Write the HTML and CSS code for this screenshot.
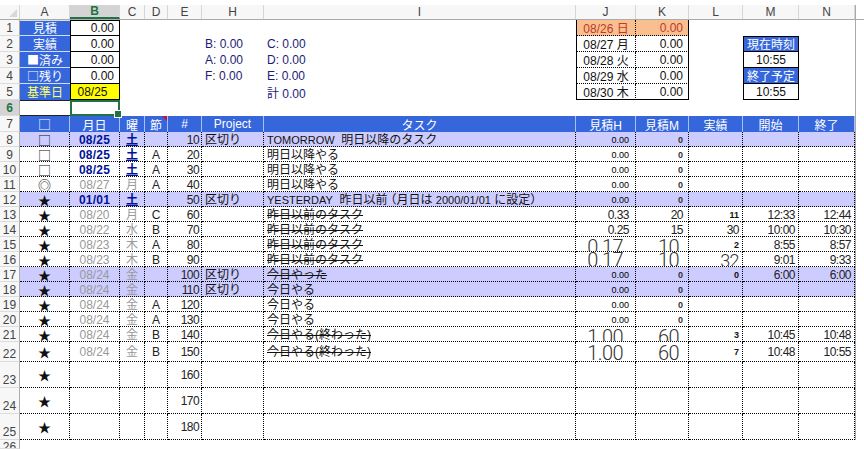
FILE: index.html
```html
<!DOCTYPE html>
<html lang="ja">
<head>
  <meta charset="UTF-8">
  <title>タスクシュート</title>
  <link rel="stylesheet" href="styles.css">
</head>
<body>
<div class="sheet">
  <!-- column letters -->
  <div class="row heads">
    <div class="corner"></div><div>A</div><div class="cur">B</div><div>C</div><div>D</div><div>E</div><div>H</div><div>I</div><div>J</div><div>K</div><div>L</div><div>M</div><div>N</div><div class="end"></div>
  </div>

  <!-- summary block -->
  <div class="row top">
    <div class="rh">1</div><div class="lab first">見積</div><div class="val first">0.00</div><div class="gap"></div><div></div><div></div><div class="day hot">08/26 日</div><div class="dayval hot">0.00</div><div></div><div></div><div></div><div class="end"></div>
  </div>
  <div class="row top">
    <div class="rh">2</div><div class="lab">実績</div><div class="val">0.00</div><div class="gap"></div><div class="sum">B: 0.00</div><div class="sum">C: 0.00</div><div class="day">08/27 月</div><div class="dayval">0.00</div><div></div><div class="clock lab first">現在時刻</div><div></div><div class="end"></div>
  </div>
  <div class="row top">
    <div class="rh">3</div><div class="lab">■済み</div><div class="val">0.00</div><div class="gap"></div><div class="sum">A: 0.00</div><div class="sum">D: 0.00</div><div class="day">08/28 火</div><div class="dayval">0.00</div><div></div><div class="clock">10:55</div><div></div><div class="end"></div>
  </div>
  <div class="row top">
    <div class="rh">4</div><div class="lab">□残り</div><div class="val">0.00</div><div class="gap"></div><div class="sum">F: 0.00</div><div class="sum">E: 0.00</div><div class="day">08/29 水</div><div class="dayval">0.00</div><div></div><div class="clock lab">終了予定</div><div></div><div class="end"></div>
  </div>
  <div class="row top">
    <div class="rh">5</div><div class="lab base">基準日</div><div class="val basedate">08/25</div><div class="gap"></div><div></div><div class="sum">計 0.00</div><div class="day">08/30 木</div><div class="dayval">0.00</div><div></div><div class="clock">10:55</div><div></div><div class="end"></div>
  </div>
  <div class="row top">
    <div class="rh cur">6</div><div class="sel-a"></div><div class="sel-b"></div><div class="gap"></div><div></div><div></div><div></div><div></div><div></div><div></div><div></div><div class="end"></div>
  </div>

  <!-- table header -->
  <div class="row thead">
    <div class="rh">7</div><div class="mark">□</div><div>月日</div><div>曜</div><div class="note">節</div><div>#</div><div>Project</div><div>タスク</div><div>見積H</div><div>見積M</div><div>実績</div><div>開始</div><div>終了</div><div class="end"></div>
  </div>

  <!-- tasks -->
  <div class="row task sep">
    <div class="rh">8</div><div class="mark">□</div><div class="date now">08/25</div><div class="wd now">土</div><div class="sec"></div><div class="no">10</div><div class="pj">区切り</div><div class="name"><span class="en">TOMORROW</span>&nbsp; 明日以降のタスク</div><div class="h">0.00</div><div class="m">0</div><div></div><div></div><div></div><div class="end"></div>
  </div>
  <div class="row task">
    <div class="rh">9</div><div class="mark">□</div><div class="date now">08/25</div><div class="wd now">土</div><div class="sec">A</div><div class="no">20</div><div class="pj"></div><div class="name">明日以降やる</div><div class="h">0.00</div><div class="m">0</div><div></div><div></div><div></div><div class="end"></div>
  </div>
  <div class="row task">
    <div class="rh">10</div><div class="mark">□</div><div class="date now">08/25</div><div class="wd now">土</div><div class="sec">A</div><div class="no">30</div><div class="pj"></div><div class="name">明日以降やる</div><div class="h">0.00</div><div class="m">0</div><div></div><div></div><div></div><div class="end"></div>
  </div>
  <div class="row task">
    <div class="rh">11</div><div class="mark">◎</div><div class="date">08/27</div><div class="wd">月</div><div class="sec">A</div><div class="no">40</div><div class="pj"></div><div class="name">明日以降やる</div><div class="h">0.00</div><div class="m">0</div><div></div><div></div><div></div><div class="end"></div>
  </div>
  <div class="row task sep">
    <div class="rh">12</div><div class="mark">★</div><div class="date now">01/01</div><div class="wd now">土</div><div class="sec"></div><div class="no">50</div><div class="pj">区切り</div><div class="name"><span class="en">YESTERDAY</span>&nbsp; 昨日以前<span class="paren">（</span>月日は <span class="en">2000/01/01</span> に設定）</div><div class="h">0.00</div><div class="m">0</div><div></div><div></div><div></div><div class="end"></div>
  </div>
  <div class="row task">
    <div class="rh">13</div><div class="mark">★</div><div class="date">08/20</div><div class="wd">月</div><div class="sec">C</div><div class="no">60</div><div class="pj"></div><div class="name"><s>昨日以前のタスク</s></div><div class="h plain">0.33</div><div class="m plain">20</div><div class="act">11</div><div class="tm">12:33</div><div class="tm">12:44</div><div class="end"></div>
  </div>
  <div class="row task">
    <div class="rh">14</div><div class="mark">★</div><div class="date">08/22</div><div class="wd">水</div><div class="sec">B</div><div class="no">70</div><div class="pj"></div><div class="name"><s>昨日以前のタスク</s></div><div class="h plain">0.25</div><div class="m plain">15</div><div class="act plain">30</div><div class="tm">10:00</div><div class="tm">10:30</div><div class="end"></div>
  </div>
  <div class="row task">
    <div class="rh">15</div><div class="mark">★</div><div class="date">08/23</div><div class="wd">木</div><div class="sec">A</div><div class="no">80</div><div class="pj"></div><div class="name"><s>昨日以前のタスク</s></div><div class="h big low">0.17</div><div class="m big low">10</div><div class="act">2</div><div class="tm">8:55</div><div class="tm">8:57</div><div class="end"></div>
  </div>
  <div class="row task">
    <div class="rh">16</div><div class="mark">★</div><div class="date">08/23</div><div class="wd">木</div><div class="sec">B</div><div class="no">90</div><div class="pj"></div><div class="name"><s>昨日以前のタスク</s></div><div class="h big">0.17</div><div class="m big">10</div><div class="act big mid">32</div><div class="tm">9:01</div><div class="tm">9:33</div><div class="end"></div>
  </div>
  <div class="row task sep">
    <div class="rh">17</div><div class="mark">★</div><div class="date">08/24</div><div class="wd">金</div><div class="sec"></div><div class="no">100</div><div class="pj">区切り</div><div class="name"><s>今日やった</s></div><div class="h">0.00</div><div class="m">0</div><div class="act">0</div><div class="tm">6:00</div><div class="tm">6:00</div><div class="end"></div>
  </div>
  <div class="row task sep">
    <div class="rh">18</div><div class="mark">★</div><div class="date">08/24</div><div class="wd">金</div><div class="sec"></div><div class="no">110</div><div class="pj">区切り</div><div class="name">今日やる</div><div class="h">0.00</div><div class="m">0</div><div></div><div></div><div></div><div class="end"></div>
  </div>
  <div class="row task">
    <div class="rh">19</div><div class="mark">★</div><div class="date">08/24</div><div class="wd">金</div><div class="sec">A</div><div class="no">120</div><div class="pj"></div><div class="name">今日やる</div><div class="h">0.00</div><div class="m">0</div><div></div><div></div><div></div><div class="end"></div>
  </div>
  <div class="row task">
    <div class="rh">20</div><div class="mark">★</div><div class="date">08/24</div><div class="wd">金</div><div class="sec">A</div><div class="no">130</div><div class="pj"></div><div class="name">今日やる</div><div class="h">0.00</div><div class="m">0</div><div></div><div></div><div></div><div class="end"></div>
  </div>
  <div class="row task">
    <div class="rh">21</div><div class="mark">★</div><div class="date">08/24</div><div class="wd">金</div><div class="sec">B</div><div class="no">140</div><div class="pj"></div><div class="name"><s>今日やる(終わった)</s></div><div class="h big low">1.00</div><div class="m big low">60</div><div class="act">3</div><div class="tm">10:45</div><div class="tm">10:48</div><div class="end"></div>
  </div>
  <div class="row task r22">
    <div class="rh">22</div><div class="mark">★</div><div class="date">08/24</div><div class="wd">金</div><div class="sec">B</div><div class="no">150</div><div class="pj"></div><div class="name"><s>今日やる(終わった)</s></div><div class="h big low">1.00</div><div class="m big low">60</div><div class="act">7</div><div class="tm">10:48</div><div class="tm">10:55</div><div class="end"></div>
  </div>
  <div class="row task tall">
    <div class="rh">23</div><div class="mark">★</div><div></div><div></div><div></div><div class="no">160</div><div></div><div></div><div></div><div></div><div></div><div></div><div></div><div class="end"></div>
  </div>
  <div class="row task tall">
    <div class="rh">24</div><div class="mark">★</div><div></div><div></div><div></div><div class="no">170</div><div></div><div></div><div></div><div></div><div></div><div></div><div></div><div class="end"></div>
  </div>
  <div class="row task tall">
    <div class="rh">25</div><div class="mark">★</div><div></div><div></div><div></div><div class="no">180</div><div></div><div></div><div></div><div></div><div></div><div></div><div></div><div class="end"></div>
  </div>
  <div class="row last">
    <div class="rh">26</div>
  </div>
</div>
</body>
</html>
```

FILE: styles.css
```css
*{box-sizing:border-box;}
html,body{margin:0;background:#fff;}
body{width:864px;height:449px;overflow:hidden;font:12px "Liberation Sans","Noto Sans CJK JP",sans-serif;color:#111;}

.sheet{padding-top:5px;height:449px;overflow:hidden;}
.row{display:grid;grid-template-columns:20px 50px 50px 25px 23px 34px 62px 312px 60px 53px 54px 56px 56px 9px;height:15px;}
.row>div{display:flex;align-items:center;min-width:0;overflow:hidden;white-space:nowrap;}
.end{border-left:1px solid #a9a9a9;}

/* column letters and row numbers */
.heads{border-bottom:1px solid #ababab;background:#f7f7f7;}
.heads>div{justify-content:center;color:#444;border-right:1px solid #d6d6d6;}
.heads .cur{background:#d4d4d4;color:#217346;font-weight:bold;border-bottom:2px solid #217346;}
.heads .end{background:#fff;border-right:0;}
.corner{position:relative;}
.corner::after{content:"";position:absolute;right:2px;bottom:2px;border-left:8px solid transparent;border-bottom:8px solid #d8d8d8;}
.row>.rh{justify-content:center;background:#f7f7f7;color:#444;border-right:1px solid #ababab;border-bottom:1px solid #dcdcdc;}
.row>.rh.cur{background:#d4d4d4;color:#217346;font-weight:bold;}

/* summary block */
.top{grid-template-columns:20px 50px 50px 82px 62px 312px 60px 53px 54px 56px 56px 9px;height:16px;}
.row>.lab{justify-content:center;background:#3566dc;color:#fff;font-family:"Noto Sans CJK JP",sans-serif;line-height:14px;border-bottom:1px solid #cfe0ff;}
.row>.val{justify-content:flex-end;padding-right:5px;border:1px solid #000;border-top:0;}
.row>.first{border-top:1px solid #ddd;}
.row>.val.first{border-top:1px solid #000;}
.row>.base{color:#ff6;border-bottom:0;}
.row>.basedate{justify-content:center;background:#ff0;}
.row>.sum{padding-left:3px;color:#1b1b78;}
.row>.day{justify-content:center;border-left:1px solid #000;border-right:1px dotted #000;border-bottom:1px dotted #000;}
.row>.dayval{justify-content:flex-end;padding-right:5px;border-right:1px solid #000;border-bottom:1px dotted #000;}
.top:nth-child(6)>.day,.top:nth-child(6)>.dayval{border-bottom:1px solid #000;}
.row>.hot{background:#fabf8f;color:#c0392b;}
.row>.clock{justify-content:center;border:1px solid #000;border-top:0;}
.row>.clock.lab{border-bottom:1px solid #000;}
.row>.clock.first{border-top:1px solid #000;}
.row>.sel-a{border-top:1px solid #222;border-bottom:1px solid #222;}
.row>.sel-b{position:relative;overflow:visible;border:2px solid #217346;z-index:1;}
.sel-b::after{content:"";position:absolute;right:-4px;bottom:-4px;width:6px;height:6px;background:#217346;border:1px solid #fff;}

/* table header */
.thead{height:16px;}
.thead>div{justify-content:center;background:#3566dc;color:#fff;border-right:1px solid #a9c0f2;}
.row.thead>.rh{background:#f7f7f7;color:#444;border-right:1px solid #ababab;}
.row.thead>.end{background:#fff;border-right:0;}
.note{position:relative;}
.note::after{content:"";position:absolute;top:0;right:0;border-top:5px solid #c0143c;border-left:5px solid transparent;}

/* task rows */
.task>div{padding-top:1px;border-right:1px dotted #000;border-bottom:1px dotted #000;}
.task>.rh,.task>.end{border-right:0;}
.task>.end{border-bottom:0;background:#fff;}
.task>.rh{border-right:1px solid #ababab;border-bottom:1px solid #dcdcdc;}
.sep>div{background:#ccccff;}
.sep>.rh{background:#f7f7f7;}
.sep>.end{background:#fff;}
.r22{height:20px;}
.tall{height:26px;}
.r22>.rh,.tall>.rh{align-items:flex-end;}
.last .rh{height:9px;align-items:flex-start;}

.mark{justify-content:center;font-size:13px;line-height:14px;font-family:"Noto Sans CJK JP",sans-serif;}
.date{justify-content:center;color:#999;}
.date.now{letter-spacing:.2px;}
.wd{justify-content:center;line-height:14px;color:#999;}
.now{color:#00139a;font-weight:bold;}
.wd.now{text-decoration:underline;}
.sec{justify-content:center;color:#222;}
.no{justify-content:flex-end;padding-right:2px;letter-spacing:-.6px;color:#222;}
.pj{padding-left:3px;line-height:14px;}
.row>.name{display:block;padding-left:3px;line-height:15px;}
.r22>.name{line-height:19px;}
.en{font-size:11px;}
.paren{margin-left:-3px;}
.h,.m,.act,.tm{justify-content:flex-end;}
.h{padding-right:6px;font-size:9px;color:#000;}
.m{padding-right:5px;font-size:9px;font-weight:bold;color:#333;}
.act{padding-right:3px;font-size:9px;font-weight:bold;}
.tm{padding-right:3px;letter-spacing:-.5px;color:#222;}
.row>.plain{font-size:12px;font-weight:normal;letter-spacing:-.5px;color:#222;}
.row>.big{align-items:flex-start;padding-top:1px;font:300 20px/15px Roboto,"Liberation Sans",sans-serif;letter-spacing:-.6px;color:#333;}
.row>.h.big{padding-right:12px;}
.row>.m.big{padding-right:9px;}
.row>.big.low{padding-top:3px;}
.r22>.big.low{padding-top:4px;}
.row>.big.mid{font-size:18px;letter-spacing:-.6px;padding-right:3px;}
```
